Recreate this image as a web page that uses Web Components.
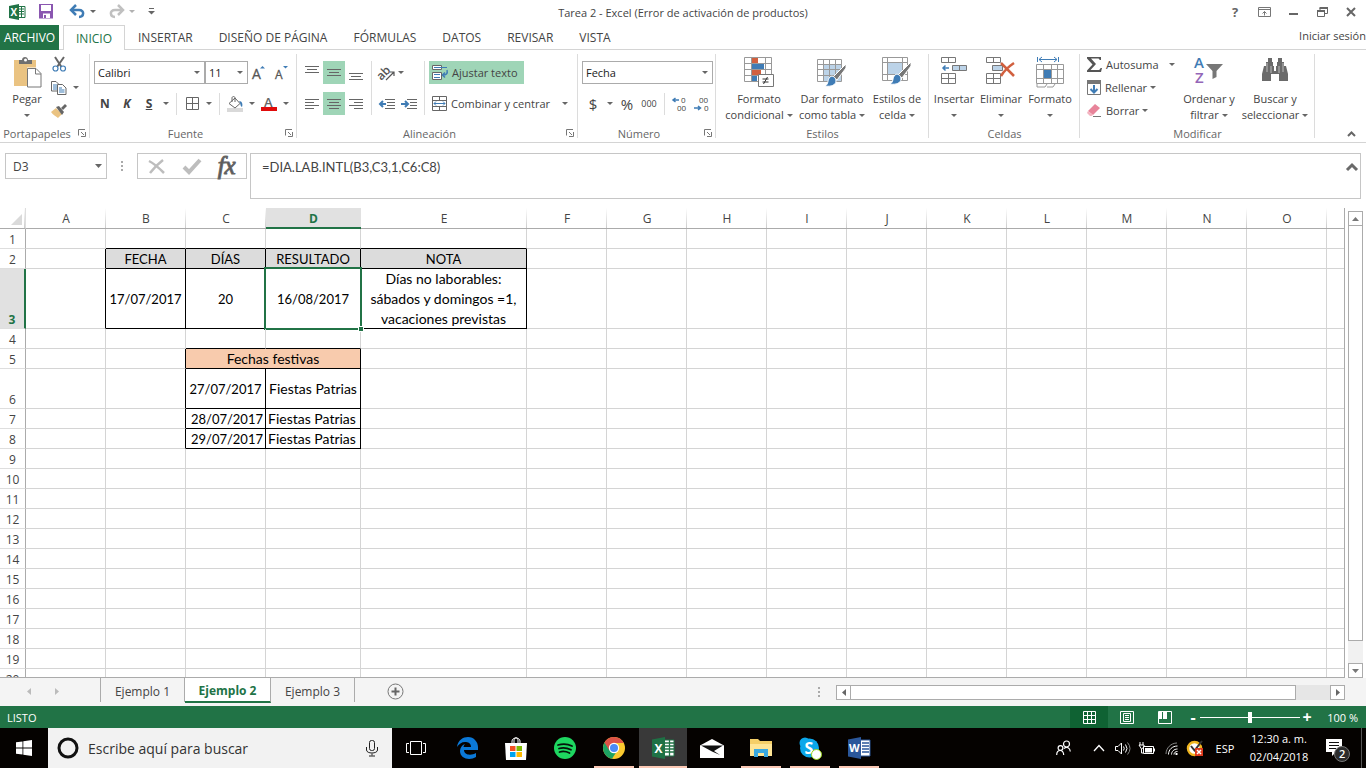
<!DOCTYPE html>
<html lang="es">
<head>
<meta charset="utf-8">
<title>Tarea 2 - Excel</title>
<style>
html,body{margin:0;height:100%}
body{font-family:"Open Sans","Noto Sans",sans-serif;font-size:11px;color:#444;background:#fff}
</style>
</head>
<body>
<excel-app></excel-app>
<script>
const RESET = `*{box-sizing:border-box}
button{font:inherit;color:inherit;background:none;border:0;padding:0;margin:0;display:flex;align-items:center;justify-content:center}
a{color:inherit;text-decoration:none}`;

function define(name, html, init) {
  customElements.define(name, class extends HTMLElement {
    constructor() { super(); this.attachShadow({ mode: 'open' }); }
    connectedCallback() {
      const t = document.createElement('template');
      t.innerHTML = `<style>${RESET}</style>` + (typeof html === 'function' ? html(this) : html);
      this.shadowRoot.replaceChildren(t.content.cloneNode(true));
      if (init) init(this.shadowRoot, this);
    }
  });
}

/* ---------- icon set: [width, height, markup] ---------- */
const lines = arr => arr.map(([y, a, b]) => `<path d="M${a} ${y}.5H${b}" stroke="#666" fill="none"/>`).join('');
const T = (x, y, s, fill, t, extra = '') => `<text x="${x}" y="${y}" font-size="${s}" fill="${fill}" font-family="Open Sans,sans-serif" ${extra}>${t}</text>`;
const ICONS = {
  caret: [6, 3, '<path d="M0 0h6L3 3z" fill="#666"/>'],
  caretBig: [7, 4, '<path d="M0 0h7L3.500 4z" fill="#666"/>'],
  launcher: [8, 8, '<path d="M.5 6.500V.5H7M3 3l3 3M7.500 3v4.500H3" stroke="#777" fill="none"/>'],
  excel: [17, 16, '<path d="M9 2.500h7v11H9" fill="#fff" stroke="#217346"/><path d="M10 5h5M10 7.500h5M10 10h5M12.500 3v10" stroke="#217346"/><path d="M0 2L10 0v16L0 14z" fill="#217346"/>' + T(1.5, 12, 10, '#fff', 'X', 'font-weight="700"')],
  save: [14, 15, '<path d="M.5.5h13v13.500H.5z" fill="#fff"/><path d="M0 0h14v14.500H0zM2 1v6h10V1zM4 9.500V14h7V9.500z" fill="#8a56b0" fill-rule="evenodd"/><path d="M5 11h2v3H5z" fill="#8a56b0"/>'],
  undo: [15, 13, '<path d="M2 5h7c6 0 5 7 0 7" stroke="#3f7cb5" stroke-width="2.500" fill="none"/><path d="M6 0L1 5l5 5" stroke="#3f7cb5" stroke-width="2.500" fill="none"/>'],
  redo: [15, 13, '<path d="M13 5H6c-6 0-5 7 0 7" stroke="#c0c0c0" stroke-width="2.500" fill="none"/><path d="M9 0l5 5-5 5" stroke="#c0c0c0" stroke-width="2.500" fill="none"/>'],
  qat: [7, 7, '<path d="M1 .5h5" stroke="#666"/><path d="M0 3h7L3.500 6.500z" fill="#666"/>'],
  help: [10, 14, T(1, 12, 13, '#666', '?', 'font-weight="700"')],
  ribbonOpts: [13, 10, '<path d="M.5.5h12v9H.5zM.5 2.500h12M6.500 8.500v-4M4.500 6.500l2-2 2 2" stroke="#777" fill="none"/>'],
  min: [9, 10, '<path d="M0 7h9" stroke="#666" stroke-width="2"/>'],
  restore: [11, 10, '<path d="M.5 4h7v5.500h-7zM3 3V1h7.500v5.500H8" stroke="#666" fill="none"/><path d="M0 4h8M2.500 1h8.500" stroke="#666" stroke-width="2"/>'],
  close: [10, 10, '<path d="M1 1l8 8M9 1L1 9" stroke="#666" stroke-width="2"/>'],
  paste: [29, 31, '<path d="M1 3h22v26H1z" fill="#eac382"/><path d="M6 7V3h3c0-4 6-4 6 0h4v4z" fill="#6f6f6f"/><circle cx="12.500" cy="3" r="1.500" fill="#fff"/><path d="M14 10.500h9.500l5 5v15H14z" fill="#fff"/><path d="M14.500 11.500h8.500l5 5v13.500H14.500z" fill="#fff" stroke="#777"/><path d="M22.500 11.500V17H28" fill="none" stroke="#777"/>'],
  cut: [15, 15, '<path d="M3 0l6.500 10M12 0L5 10" stroke="#666" stroke-width="2"/><circle cx="3.500" cy="11.500" r="2.500" fill="#fff" stroke="#3f7cb5" stroke-width="1.200"/><circle cx="11" cy="11.500" r="2.500" fill="#fff" stroke="#3f7cb5" stroke-width="1.200"/>'],
  copy: [16, 14, '<path d="M.5.5H5l2.500 2.500v7h-7z" fill="#fff" stroke="#666"/><path d="M2 4h4M2 6h4M2 8h4" stroke="#3f7cb5"/><path d="M6.500 3.500h5L15 7v6.500H6.500z" fill="#fff" stroke="#666"/><path d="M8 7h3M8 9h5.500M8 11h5.500" stroke="#3f7cb5"/>'],
  brush: [16, 14, '<path d="M0 8l5-4 6 6-4 4C5 12 2 11 0 8z" fill="#eac382"/><path d="M5 3l3-1 5 6-2 3z" fill="#666"/><path d="M10 4l4-4 2 2-4 4z" fill="#666"/>'],
  fontUp: [14, 14, T(0, 13, 14, '#555', 'A', 'stroke="#555" stroke-width=".3"') + '<path d="M8 2.500h5L10.500 0z" fill="#3f7cb5"/>'],
  fontDown: [13, 14, T(0, 13, 12, '#555', 'A', 'stroke="#555" stroke-width=".3"') + '<path d="M8 0h5l-2.500 2.500z" fill="#3f7cb5"/>'],
  border: [13, 13, '<path d="M.5.5h12v12H.5zM6.500.5v12M.5 6.500h12" stroke="#666" fill="none"/>'],
  fill: [17, 16, '<path d="M0 12h16v4H0z" fill="#d9d9d9"/><path d="M2 7.500L8 2l5 5.500L8 12z" fill="#fff" stroke="#666"/><path d="M5 6V2c0-2 3-2 3 0v4" fill="none" stroke="#666"/><path d="M12 5c3 0 4 3 3 6-2-1-1-3-3-6z" fill="#3f7cb5"/>'],
  fontColor: [16, 16, T(3, 11, 13, '#666', 'A', 'font-weight="600"') + '<path d="M0 11h16v4H0z" fill="#e00b0b"/>'],
  aTop: [14, 14, lines([[0, 0, 14], [3, 2, 12], [6, 0, 14]])],
  aMid: [14, 14, lines([[3, 0, 14], [6, 2, 12], [9, 0, 14]])],
  aBot: [14, 14, lines([[7, 0, 14], [10, 2, 12], [13, 0, 14]])],
  aLeft: [14, 10, lines([[0, 0, 14], [3, 0, 9], [6, 0, 14], [9, 0, 9]])],
  aCen: [14, 10, lines([[0, 0, 14], [3, 2, 12], [6, 0, 14], [9, 2, 12]])],
  aRight: [14, 10, lines([[0, 0, 14], [3, 5, 14], [6, 0, 14], [9, 5, 14]])],
  orient: [16, 16, T(-2, 12, 12, '#555', 'ab', 'font-weight="600" transform="rotate(-45 5 9)"') + '<path d="M7 15l7.500-7.500M11 7h4v4" stroke="#555" stroke-width="1.200" fill="none"/>'],
  outdent: [16, 10, lines([[0, 6, 16], [3, 8, 16], [6, 8, 16], [9, 6, 16]]) + '<path d="M1 5h6M4 2L1 5l3 3" stroke="#3f7cb5" stroke-width="2" fill="none"/>'],
  indent: [16, 10, lines([[0, 6, 16], [3, 9, 16], [6, 9, 16], [9, 6, 16]]) + '<path d="M0 5h6M4 2l3 3-3 3" stroke="#3f7cb5" stroke-width="2" fill="none"/>'],
  wrap: [16, 15, '<path d="M.5.5h9v4h-9zM.5 7.500h9v7h-9z" fill="#fff" stroke="#666"/><path d="M2 2.500h13M2 9.500h6M2 12.500h6" stroke="#3f7cb5"/><path d="M15 5c1 4-1 5-4 5M13 7.500L10.500 10l2.500 2.500" stroke="#3f7cb5" stroke-width="1.500" fill="none"/>'],
  merge: [15, 15, '<path d="M.5.5h14v14H.5zM.5 4.500h14M.5 10.500h14M7.500.5v4M7.500 10.500v4" stroke="#666" fill="#fff"/><path d="M2 7.500h11M4 5.500l-2 2 2 2M11 5.500l2 2-2 2" stroke="#3f7cb5" fill="none"/>'],
  decUp: [16, 16, T(9, 7, 8, '#444', '0') + T(5, 15, 8, '#444', '00') + '<path d="M1 4h6M3.500 2L1 4l2.500 2" stroke="#3f7cb5" stroke-width="1.500" fill="none"/>'],
  decDown: [16, 16, T(5, 7, 8, '#444', '00') + T(10, 15, 8, '#444', '0') + '<path d="M0 12h6M4 10l2.500 2L4 14" stroke="#3f7cb5" stroke-width="1.500" fill="none"/>'],
  condFmt: [30, 31, '<path d="M.5.5h27v24H.5z" fill="#fff"/><path d="M8 0h6v6H8zM8 12h9v6H8z" fill="#d1603f"/><path d="M8 6h12v6H8zM8 18h5v6H8z" fill="#3f7cb5"/><path d="M.5.500h27v24H.5zM.5 6.500h27M.5 12.500h27M.5 18.500h27M7.500.5v24M21.500.5v24" stroke="#999" fill="none"/><path d="M14.500 17.500h15v12h-15z" fill="#fff" stroke="#777"/><path d="M18.500 22h6M18.500 25h6M23.500 20l-4 7" stroke="#333" fill="none"/>'],
  fmtTable: [31, 30, '<path d="M.5 2.500h24v22H.5z" fill="#fff"/><path d="M6 8h18v16H6z" fill="#bcd3e8"/><path d="M.5 2.500h24v22H.5zM.5 7.500h24M.5 12.500h24M.5 18.500h24M6.500 2.500v22M12.500 2.500v22M18.500 2.500v22" stroke="#999" fill="none"/><path d="M29 7v4l-9 12-4-3z" fill="#777" stroke="#fff"/><path d="M13 20c2-2 6 0 6 4s-5 6-11 5c4-2 2-6 5-9z" fill="#3f7cb5" stroke="#fff"/>'],
  cellStyle: [31, 30, '<path d="M.5.500h25v23H.5zM.5 5.500h25M.5 17.500h25M5.500.5v23M20.500.5v23" stroke="#999" fill="#fff"/><path d="M6 6h14v11H6z" fill="#bcd3e8"/><path d="M29 5v4l-9 12-4-3z" fill="#777" stroke="#fff"/><path d="M13 18c2-2 6 0 6 4s-5 6-11 5c4-2 2-6 5-9z" fill="#3f7cb5" stroke="#fff"/>'],
  insCell: [27, 28, '<path d="M.5.5h14v5H.5zM7.500.5v5M.5 16.500h14v10H.5zM7.500 16.500v10M.5 21.500h14" stroke="#777" fill="#fff"/><path d="M11.500 8.500h14v5h-14zM18.500 8.500v5" stroke="#777" fill="#bcd3e8"/><path d="M2 11h6M4.500 8.500L2 11l2.500 2.500" stroke="#3f7cb5" stroke-width="1.500" fill="none"/>'],
  delCell: [30, 28, '<path d="M.5.5h14v5H.5zM7.500.5v5M.5 16.500h14v10H.5zM7.500 16.500v10M.5 21.500h14" stroke="#777" fill="#fff"/><path d="M6.500 8.500h10v5h-10z" stroke="#777" fill="#bcd3e8"/><path d="M15 6l13 13M28 6C22 10 18 14 15 19" stroke="#d1603f" stroke-width="2.500" fill="none"/>'],
  fmtCell: [29, 31, '<path d="M1.500 0v5M22.500 0v5M3 2.500h18M6 0L3 2.500 6 5M18 0l3 2.500L18 5" stroke="#3f7cb5" fill="none"/><path d="M.5 7.500h27v19H.5zM.5 12.500h27M.5 21.500h27M7.500 7.500v19M15.500 7.500v19M21.500 7.500v19" stroke="#999" fill="#fff"/><path d="M8 13h7v8H8z" fill="#3f7cb5"/><path d="M1 27v3h8l2-3M11 30h6l2-3" stroke="#999" fill="none"/>'],
  sigma: [15, 15, '<path d="M0 0h14v3h-1.500c0-1-.5-1.500-2-1.500H4l5 5.500-5.500 6H11c1.500 0 2-.5 2.500-2H15l-1 4H0v-1.500L5.500 7.500 0 1.500z" fill="#555"/>'],
  fillDown: [14, 15, '<path d="M.5.5h13v14H.5z" fill="#fff" stroke="#777"/><path d="M0 0h14v4H0z" fill="#777"/><path d="M7 5v7M3.500 9L7 12.500 10.500 9" stroke="#3f7cb5" stroke-width="2" fill="none"/>'],
  erase: [15, 13, '<path d="M1 7l7-7 5 4-7 7z" fill="#e8849a"/><path d="M1 7l5 4-1.500 1H3L0 9z" fill="#f3b3c0"/><path d="M6 12.500h8" stroke="#777"/>'],
  sort: [30, 29, T(0, 11, 15, '#3f7cb5', 'A', 'font-weight="600"') + T(1, 26, 15, '#9466b8', 'Z', 'font-weight="600"') + '<path d="M12 7h17l-6.500 7v6l-4 2v-8z" fill="#777"/>'],
  find: [28, 25, '<path d="M7 1h4v4H7zM17 1h4v4h-4zM5 5h7v4H5zM16 5h7v4h-7zM3 9h10v5h2V9h10l2 8v7h-9v-7h-8v7H1v-7z" fill="#6a6a6a"/><path d="M6 6v9M22 6v9M10 9v7M18 9v7" stroke="#bbb"/>'],
  up: [9, 6, '<path d="M1 5l3.500-3.500L8 5" stroke="#666" stroke-width="2" fill="none"/>'],
  upBold: [12, 8, '<path d="M1 7l5-5 5 5" stroke="#6a6a6a" stroke-width="3" fill="none"/>'],
  cancel: [18, 15, '<path d="M1 2c6 3 11 8 15 12M15 1C11 4 6 9 2 14" stroke="#bdbdbd" stroke-width="2.500" fill="none"/>'],
  accept: [19, 16, '<path d="M1 9l5 5L17 2" stroke="#bdbdbd" stroke-width="4" fill="none"/>'],
  dots: [3, 11, '<path d="M0 0h2v2H0zM0 4h2v2H0zM0 8h2v2H0z" fill="#aaa"/>'],
  triUp: [7, 4, '<path d="M0 4h7L3.500 0z" fill="#777"/>'],
  triDown: [7, 4, '<path d="M0 0h7L3.500 4z" fill="#777"/>'],
  triL: [4, 7, '<path d="M4 0v7L0 3.500z" fill="currentColor"/>'],
  triR: [4, 7, '<path d="M0 0v7l4-3.500z" fill="currentColor"/>'],
  add: [17, 17, '<circle cx="8.500" cy="8.500" r="7.500" fill="none" stroke="#777"/><path d="M4.500 8.500h8M8.500 4.500v8" stroke="#666" stroke-width="2"/>'],
  corner: [11, 11, '<path d="M11 0v11H0z" fill="#dadada"/>'],
  vNormal: [13, 13, '<path d="M.5.5h12v12H.5zM.5 4.500h12M.5 8.500h12M4.500.5v12M8.500.5v12" stroke="#fff" fill="none"/>'],
  vPage: [14, 13, '<path d="M.5.5h13v12H.5zM3.500 2.500h7v8h-7zM5 4.500h4M5 6.500h4M5 8.500h4" stroke="#fff" fill="none"/>'],
  vBreak: [14, 13, '<path d="M.5.5h13v12H.5z" stroke="#fff" fill="none"/><path d="M1 1h3v7H1zM5 1h4v7H5z" fill="#fff"/>'],
  win: [16, 16, '<path d="M0 2.300L6.500 1.400v6.200H0zM7.300 1.300L16 0v7.600H7.300zM0 8.400h6.500v6.200L0 13.700zM7.300 8.400H16V16l-8.700-1.300z" fill="#fff"/>'],
  cortana: [22, 22, '<circle cx="11" cy="11" r="9" fill="none" stroke="#111" stroke-width="3"/>'],
  mic: [12, 17, '<rect x="3.500" y=".5" width="5" height="10" rx="2" fill="none" stroke="#222"/><path d="M.5 7v3c0 4 11 4 11 0V7M6 13.500v2M3 16h6" fill="none" stroke="#222"/>'],
  taskview: [20, 14, '<path d="M4.500.5h11v13h-11zM3 2.500H.5v9H3M17 2.500h2.500v9H17" stroke="#fff" fill="none"/>'],
  edge: [21, 22, '<path d="M0 10C1 3 6 0 11 0c6 0 10 5 10 10v3H7c0 5 7 6 12 3v4c-6 4-16 2-16-6 0-3 2-6 5-7-1 1-1.500 2-1.500 3H14c0-4-3-5-6-5-3.500 0-6 2-8 5z" fill="#0b78d6"/>'],
  store: [24, 23, '<path d="M8 6V4c0-4 8-4 8 0v2M10 6V3c0-3 4-3 4 0v3" stroke="#fff" fill="none"/><path d="M1 6h22l-1 17H2z" fill="#fff"/><path d="M6 9h5.500v5H6z" fill="#f25022"/><path d="M12.500 9H18v5h-5.500z" fill="#7fba00"/><path d="M6 15h5.500v5H6z" fill="#00a4ef"/><path d="M12.500 15H18v5h-5.500z" fill="#ffb900"/>'],
  spotify: [22, 22, '<circle cx="11" cy="11" r="11" fill="#1ed760"/><path d="M4 8c5-1.500 10-1 14 1M5 11.500c4-1.200 8-.7 12 1.200M5.500 15c3.500-1 7-.5 10 1" stroke="#04140a" stroke-width="1.800" stroke-linecap="round" fill="none"/>'],
  chrome: [22, 22, '<circle cx="11" cy="11" r="11" fill="#fbc92f"/><path d="M11 11L1.500 5.500A11 11 0 0 0 9 21.800L14 14z" fill="#1da362"/><path d="M11 0A11 11 0 0 0 1.500 5.500L6 13l5-7h9.800A11 11 0 0 0 11 0z" fill="#dd5347"/><circle cx="11" cy="11" r="5.200" fill="#fff"/><circle cx="11" cy="11" r="4" fill="#4b8bf5"/>'],
  excelBig: [23, 22, '<path d="M12 3h10v16H12z" fill="#fff" stroke="#217346"/><path d="M13 6h9M13 9h9M13 12h9M13 15h9M17.500 3v16" stroke="#217346" stroke-width="1.300"/><path d="M0 2.500L13 0v22L0 19.500z" fill="#1e7145"/>' + T(2.5, 15.5, 12, '#fff', 'X', 'font-weight="700"')],
  mail: [24, 19, '<path d="M12 0l12 6.500V19H0V6.500z" fill="#fff"/><path d="M1 6.500h22L14 12l6 4-8-3.500z" fill="#111"/>'],
  folder: [22, 20, '<path d="M0 1h8l2 2h12v15H0z" fill="#f5cf68"/><path d="M0 6h22v12H0z" fill="#ffe595"/><path d="M4 11h14v8h-4v-4H8v4H4z" fill="#3ba9e0"/>'],
  skype: [23, 23, '<circle cx="10.500" cy="11" r="9.500" fill="#0ba7ea"/><circle cx="6" cy="6" r="5.500" fill="#0ba7ea"/>' + T(5.5, 17, 16, '#fff', 'S', 'font-weight="700"') + '<circle cx="17.500" cy="17.500" r="5" fill="#fff" stroke="#9bd61c"/>'],
  word: [23, 22, '<path d="M12 3h10v16H12z" fill="#fff" stroke="#2b579a"/><path d="M14 6h7M14 9h7M14 12h7M14 15h7" stroke="#2b579a" stroke-width="1.300"/><path d="M0 2.500L13 0v22L0 19.500z" fill="#2b579a"/>' + T(1, 15, 11, '#fff', 'W', 'font-weight="700"')],
  people: [15, 16, '<circle cx="10.500" cy="4" r="3" fill="none" stroke="#fff" stroke-width="1.200"/><circle cx="4.500" cy="8" r="2.400" fill="none" stroke="#fff" stroke-width="1.200"/><path d="M.7 15c0-6 7-6 7 0M8 8.500c3-2.500 6-.5 6.300 3" fill="none" stroke="#fff" stroke-width="1.200"/>'],
  chev: [12, 8, '<path d="M1 7l5-5.500L11 7" fill="none" stroke="#fff" stroke-width="1.300"/>'],
  vol: [16, 13, '<path d="M.5 4.500H3l3.500-3.500v11L3 8.500H.5z" fill="none" stroke="#fff"/><path d="M8.500 4.500q1.500 2 0 4M10.500 2.500q3 4 0 8" fill="none" stroke="#fff"/><path d="M12.500.5q5 6 0 12" fill="none" stroke="#888"/>'],
  batt: [16, 13, '<path d="M4.500 4.500h10v7h-10z" fill="none" stroke="#fff"/><path d="M6 6h7v4.500H6zM15 6.500h1v3h-1z" fill="#fff"/><path d="M1 0v3M4 0v3M0 3h5v2L2.500 7zM2.500 7v4H4" stroke="#fff" fill="none"/>'],
  wifi: [13, 13, '<path d="M1 12C1 6 6 1 12 1" stroke="#888" fill="none"/><path d="M3.500 12.500c0-5 4-8.500 9-8.500M6.500 12.500c0-3 2.500-5.500 6-5.500M9 12.500c0-2 1.500-3 3.500-3" stroke="#fff" fill="none"/><path d="M10.500 11h2v2h-2z" fill="#fff"/>'],
  norton: [17, 16, '<circle cx="7.500" cy="8.500" r="6.500" fill="#fff" stroke="#f0b51e" stroke-width="2.500"/><path d="M4 6l3.500 4.500L15 1" stroke="#333" stroke-width="2" fill="none"/><path d="M8 8h8v8H8z" fill="#dd3a1c"/><path d="M10 10l4 4M14 10l-4 4" stroke="#fff" stroke-width="1.500"/>'],
  notif: [24, 24, '<path d="M0 0h16v13h-6l-4 4v-4H0z" fill="#fff"/><path d="M3 3.500h10M3 6.500h10M3 9.500h7" stroke="#111"/><circle cx="16" cy="15" r="7.500" fill="#2c2c2c" stroke="#777"/>' + T(13, 19, 11, '#fff', '2', 'font-weight="600"')],
};
customElements.define('ui-icon', class extends HTMLElement {
  connectedCallback() {
    const [w, h, body] = ICONS[this.getAttribute('name')];
    const root = this.shadowRoot || this.attachShadow({ mode: 'open' });
    root.innerHTML = `<style>:host{display:inline-flex;flex:none;vertical-align:middle}svg{display:block;overflow:visible}</style>
      <svg width="${w}" height="${h}" viewBox="0 0 ${w} ${h}" aria-hidden="true">${body}</svg>`;
  }
});

/* ---------- title bar ---------- */
define('title-bar', `
<style>
:host{display:grid;grid-template-columns:1fr auto 1fr;align-items:center;height:25px;color:#444}
.left{display:flex;align-items:center;padding:0 0 2px 9px;gap:5px}
.left ui-icon[name=save]{margin:0 12px 0 8px}
.right{display:flex;justify-content:flex-end;padding:0 6px 2px 0}
.right button{width:29px;height:22px}
h1{font-size:11px;font-weight:400;margin:0}
</style>
<div class="left"><ui-icon name="excel"></ui-icon>
<button aria-label="Guardar"><ui-icon name="save"></ui-icon></button>
<button aria-label="Deshacer"><ui-icon name="undo"></ui-icon></button><ui-icon name="caret"></ui-icon>
<button aria-label="Rehacer" style="margin-left:8px"><ui-icon name="redo"></ui-icon></button><ui-icon name="caret" style="opacity:.5"></ui-icon>
<button aria-label="Personalizar" style="margin-left:8px"><ui-icon name="qat"></ui-icon></button></div>
<h1>Tarea 2 - Excel (Error de activación de productos)</h1>
<div class="right"><button aria-label="Ayuda"><ui-icon name="help"></ui-icon></button><button aria-label="Opciones"><ui-icon name="ribbonOpts"></ui-icon></button><button aria-label="Minimizar"><ui-icon name="min"></ui-icon></button><button aria-label="Restaurar"><ui-icon name="restore"></ui-icon></button><button aria-label="Cerrar" style="width:19px;margin-left:4px"><ui-icon name="close"></ui-icon></button></div>`);

/* ---------- ribbon tabs ---------- */
define('ribbon-tabs', `
<style>
:host{display:flex;height:25px;border-bottom:1px solid #d4d4d4;font-size:12px}
nav{display:flex;flex:1}
a{display:flex;align-items:center;justify-content:center;height:25px;padding:0 13px}
.file{background:#217346;color:#fff;padding:0;width:59px;margin-right:4px}
.on{width:62px;padding:0;border:1px solid #d4d4d4;border-bottom:0;background:#fff;color:#217346}
.user{padding:0;font-size:11px;height:20px}
</style>
<nav><a class="file" href="#">ARCHIVO</a><a class="on" href="#">INICIO</a><a href="#">INSERTAR</a><a href="#">DISEÑO DE PÁGINA</a><a href="#">FÓRMULAS</a><a href="#">DATOS</a><a href="#">REVISAR</a><a href="#">VISTA</a></nav>
<a class="user" href="#">Iniciar sesión</a>`);

/* ---------- ribbon parts ---------- */
define('ribbon-group', el => `
<style>
:host{display:flex;flex-direction:column;flex:none;position:relative}
:host::after{content:"";position:absolute;right:0;top:4px;bottom:4px;width:1px;background:#dcdcdc}
.body{display:flex;height:75px}
footer{display:flex;align-items:center;height:16px;color:#666}
footer button{width:16px;height:16px}
span{flex:1;text-align:center}
</style>
<div class="body"><slot></slot></div>
<footer><span>${el.getAttribute('label')}</span>${el.hasAttribute('launcher') ? '<button aria-label="Más opciones"><ui-icon name="launcher"></ui-icon></button>' : ''}</footer>`);

define('big-button', el => `
<style>
:host{display:block;flex:none}
button{width:100%;flex-direction:column;justify-content:flex-start;padding-top:7px;line-height:16px;white-space:nowrap}
.pic{height:34px;display:flex;align-items:flex-start}
.second{display:flex;align-items:center;gap:3px;height:16px}
</style>
<button><span class="pic"><ui-icon name="${el.getAttribute('icon')}"></ui-icon></span><span>${el.getAttribute('top')}</span><span class="second">${el.getAttribute('bottom') || ''}<ui-icon name="caret"></ui-icon></span></button>`);

define('tool-button', el => `
<style>
:host{display:block;flex:none;width:22px}
:host([text]){width:auto}
button{width:100%;height:23px;gap:4px;font-size:inherit;font-weight:inherit}
:host([text]) button{padding:0 3px;justify-content:flex-start}
:host([on]) button{background:#9fd5b7}
</style>
<button title="${el.getAttribute('tip') || ''}">${el.getAttribute('icon') ? `<ui-icon name="${el.getAttribute('icon')}"></ui-icon>` : ''}<slot></slot></button>`);

define('drop-box', el => `
<style>
:host{display:flex;align-items:center;position:relative;height:23px;border:1px solid #ababab;flex:none;color:#222}
select{appearance:none;border:0;background:none;font:inherit;color:inherit;width:100%;height:100%;padding:0 3px;margin:0;outline:0}
ui-icon{position:absolute;right:4px;pointer-events:none}
</style>
<select aria-label="${el.getAttribute('label')}"><option>${el.getAttribute('value')}</option></select><ui-icon name="${el.getAttribute('caret') || 'caret'}"></ui-icon>`);

define('excel-ribbon', `
<style>
:host{display:flex;height:93px;border-bottom:1px solid #d4d4d4;color:#444}
.rows{display:flex;flex-direction:column;padding-top:7px}
.rows>div{display:flex;align-items:center;height:31px}
.list{display:flex;flex-direction:column;padding-top:3px}
.list>div{display:flex;align-items:center;height:23px}
.c{width:12px;display:flex;justify-content:center}
.v{width:9px;height:22px;background:linear-gradient(#dcdcdc,#dcdcdc) center/1px 100% no-repeat}
.v.tall{height:54px;margin-top:11px}
.clip{width:90px}.font{width:207px}.align{width:281px}.num{width:138px}.sty{width:213px}.cells{width:151px}.edit{width:235px}
.pad{padding-left:4px}
.icons{margin-left:-6px}
tool-button.b{font-weight:700;font-size:12px}
tool-button.sym{font-size:15px}
tool-button.mil{font-size:9px}
.u{text-decoration:underline}
.end{margin-left:auto;display:flex;align-items:flex-end;padding:0 10px 5px}
</style>
<ribbon-group class="clip" label="Portapapeles" launcher>
  <big-button style="width:54px" icon="paste" top="Pegar"></big-button>
  <div class="list icons"><div><tool-button icon="cut" tip="Cortar"></tool-button></div><div><tool-button icon="copy" tip="Copiar"></tool-button><span class="c"><ui-icon name="caret"></ui-icon></span></div><div><tool-button icon="brush" tip="Copiar formato"></tool-button></div></div>
</ribbon-group>
<ribbon-group class="font" label="Fuente" launcher>
  <div class="rows pad"><div><drop-box label="Fuente" value="Calibri" style="width:111px"></drop-box><drop-box label="Tamaño" value="11" style="width:43px"></drop-box><tool-button icon="fontUp"></tool-button><tool-button icon="fontDown"></tool-button></div>
  <div><tool-button class="b">N</tool-button><tool-button class="b"><i>K</i></tool-button><tool-button class="b"><span class="u">S</span></tool-button><span class="c"><ui-icon name="caret"></ui-icon></span><span class="v"></span><tool-button icon="border"></tool-button><span class="c"><ui-icon name="caret"></ui-icon></span><span class="v"></span><tool-button icon="fill"></tool-button><span class="c"><ui-icon name="caret"></ui-icon></span><tool-button icon="fontColor"></tool-button><span class="c"><ui-icon name="caret"></ui-icon></span></div></div>
</ribbon-group>
<ribbon-group class="align" label="Alineación" launcher>
  <div class="rows pad"><div><tool-button icon="aTop"></tool-button><tool-button icon="aMid" on></tool-button><tool-button icon="aBot"></tool-button></div><div><tool-button icon="aLeft"></tool-button><tool-button icon="aCen" on></tool-button><tool-button icon="aRight"></tool-button></div></div>
  <span class="v tall"></span>
  <div class="rows"><div><tool-button icon="orient"></tool-button><ui-icon name="caret"></ui-icon></div><div><tool-button icon="outdent"></tool-button><tool-button icon="indent"></tool-button></div></div>
  <span class="v tall"></span>
  <div class="rows"><div><tool-button text on icon="wrap" style="width:95px">Ajustar texto</tool-button></div><div><tool-button text icon="merge" style="width:130px">Combinar y centrar</tool-button><span class="c"><ui-icon name="caret"></ui-icon></span></div></div>
</ribbon-group>
<ribbon-group class="num" label="Número" launcher>
  <div class="rows pad"><div><drop-box label="Formato de número" value="Fecha" style="width:131px"></drop-box></div>
  <div><tool-button class="sym">$</tool-button><span class="c"><ui-icon name="caret"></ui-icon></span><tool-button class="sym">%</tool-button><tool-button class="mil">000</tool-button><span class="v"></span><tool-button icon="decUp"></tool-button><tool-button icon="decDown"></tool-button></div></div>
</ribbon-group>
<ribbon-group class="sty" label="Estilos"><big-button class="pad" style="width:82px" icon="condFmt" top="Formato" bottom="condicional"></big-button><big-button style="width:68px" icon="fmtTable" top="Dar formato" bottom="como tabla"></big-button><big-button style="width:62px" icon="cellStyle" top="Estilos de" bottom="celda"></big-button></ribbon-group>
<ribbon-group class="cells" label="Celdas"><big-button style="width:50px" icon="insCell" top="Insertar"></big-button><big-button style="width:44px" icon="delCell" top="Eliminar"></big-button><big-button style="width:54px" icon="fmtCell" top="Formato"></big-button></ribbon-group>
<ribbon-group class="edit" label="Modificar">
  <div class="list pad" style="width:96px"><div><tool-button text icon="sigma">Autosuma</tool-button><span class="c" style="margin-left:6px"><ui-icon name="caret"></ui-icon></span></div><div><tool-button text icon="fillDown">Rellenar</tool-button><ui-icon name="caret"></ui-icon></div><div><tool-button text icon="erase">Borrar</tool-button><ui-icon name="caret"></ui-icon></div></div>
  <big-button style="width:66px" icon="sort" top="Ordenar y" bottom="filtrar"></big-button><big-button style="width:66px" icon="find" top="Buscar y" bottom="seleccionar"></big-button>
</ribbon-group>
<div class="end"><button aria-label="Contraer"><ui-icon name="up"></ui-icon></button></div>`);

/* ---------- formula bar ---------- */
define('formula-bar', `
<style>
:host{display:flex;align-items:flex-start;padding:10px 5px 0;height:65px}
drop-box{width:102px;height:26px;border-color:#c6c6c6;padding-left:4px;font-size:12px;color:#444}
.dots{width:30px;height:26px;display:flex;align-items:center;justify-content:center}
.btns{display:flex;width:110px;height:26px;border:1px solid #c6c6c6;padding:0 2px}
.btns button{flex:1}
.btns .fx{font:italic 25px/22px "Liberation Serif",serif;color:#555;-webkit-text-stroke:1px #666}
.box{flex:1;display:flex;align-items:flex-start;border:1px solid #c6c6c6;height:46px;margin-left:3px}
textarea{flex:1;border:0;outline:0;resize:none;height:42px;padding:4px 11px;font:13px/18px Lato,sans-serif;color:#444;background:none;overflow:hidden}
.box button{padding:9px 2px}
</style>
<drop-box label="Cuadro de nombres" value="D3" caret="caretBig"></drop-box>
<span class="dots"><ui-icon name="dots"></ui-icon></span>
<div class="btns"><button aria-label="Cancelar"><ui-icon name="cancel"></ui-icon></button><button aria-label="Introducir"><ui-icon name="accept"></ui-icon></button><button class="fx">fx</button></div>
<div class="box"><textarea aria-label="Fórmula" spellcheck="false">=DIA.LAB.INTL(B3,C3,1,C6:C8)</textarea><button aria-label="Contraer"><ui-icon name="upBold"></ui-icon></button></div>`);

/* ---------- sheet grid ---------- */
const COLS = 'ABCDEFGHIJKLMNO'.split('');
const WIDTHS = { D: 95, E: 166 };
const HEIGHTS = { 3: 60, 6: 40 };
// cell -> [text, classes, colspan]; r and b are black right and bottom borders, t is running text
const CELLS = {
  A2: ['', 'r'], A3: ['', 'r'], B1: ['', 'b'], C1: ['', 'b'], D1: ['', 'b'], E1: ['', 'b'],
  B2: ['FECHA', 'r b h'], C2: ['DÍAS', 'r b h'], D2: ['RESULTADO', 'r b h'], E2: ['NOTA', 'r b h'],
  B3: ['17/07/2017', 'r b'], C3: ['20', 'r b'], D3: ['16/08/2017', 'r b sel'],
  E3: ['<div class="note">Días no laborables:<br>sábados y domingos =1,<br>vacaciones previstas</div>', 'r b t'],
  C4: ['', 'b'], D4: ['', 'b'], B5: ['', 'r'], B6: ['', 'r'], B7: ['', 'r'], B8: ['', 'r'],
  C5: ['Fechas festivas', 'r b o t', 2],
  C6: ['27/07/2017', 'r b'], D6: ['Fiestas Patrias', 'r b t'],
  C7: ['28/07/2017', 'r b right'], D7: ['Fiestas Patrias', 'r b t left'],
  C8: ['29/07/2017', 'r b right'], D8: ['Fiestas Patrias', 'r b t left'],
};
define('sheet-grid', () => {
  let rows = '';
  for (let n = 1; n <= 20; n++) {
    let tds = '';
    for (let i = 0; i < COLS.length; i++) {
      const [text, cls, span] = CELLS[COLS[i] + n] || ['', ''];
      tds += `<td class="${cls}"${span ? ` colspan="${span}"` : ''}>${text}</td>`;
      if (span) i += span - 1;
    }
    rows += `<tr style="height:${HEIGHTS[n] || 20}px"><th scope="row"${n === 3 ? ' class="on"' : ''}>${n}</th>${tds}<td></td></tr>`;
  }
  return `
<style>
:host{display:block;overflow:hidden;border-right:1px solid #ababab;border-bottom:1px solid #ababab;background:#fff}
table{table-layout:fixed;width:100%;border-collapse:separate;border-spacing:0;font:13px/18px Lato,sans-serif;color:#000}
th,td{padding:0;height:20px;white-space:nowrap}
td{border-right:1px solid #d4d4d4;border-bottom:1px solid #d4d4d4;text-align:center;vertical-align:middle;position:relative}
td:last-child{border-right:0}
th{font:12px/16px "Open Sans",sans-serif;color:#444}
thead th{height:21px;padding-top:2px;border-bottom:1px solid #ababab;background:linear-gradient(#fff,#ccc) right/1px 100% no-repeat}
thead th:last-child{background:none}
thead .on{background:#e1e1e1;color:#217346;font-weight:700;border-bottom:2px solid #217346}
tbody th{border-right:1px solid #ababab;border-bottom:1px solid #dedede;vertical-align:bottom}
tbody .on{background:#e1e1e1;color:#217346;font-weight:700;border-right:2px solid #217346}
thead .corner{vertical-align:bottom;border-right:1px solid #ddd}
.corner ui-icon{margin:0 0 2px 7px}
.r{border-right-color:#000}.b{border-bottom-color:#000}
.h{background:#dcdcdc}.o{background:#f8cbad}
.t{font-size:14px}
.left{text-align:left;padding-left:2px}.right{text-align:right;padding-right:2px}
.note{line-height:20px;height:59px}
.sel::after{content:"";position:absolute;inset:-2px;border:2px solid #217346}
.sel::before{content:"";position:absolute;right:-4px;bottom:-4px;width:6px;height:6px;background:#217346;border:1px solid #fff;box-sizing:border-box;z-index:1}
</style>
<table><colgroup><col style="width:26px">${COLS.map(c => `<col style="width:${WIDTHS[c] || 80}px">`).join('')}<col></colgroup>
<thead><tr><th class="corner"><ui-icon name="corner"></ui-icon></th>${COLS.map(c => `<th scope="col"${c === 'D' ? ' class="on"' : ''}>${c}</th>`).join('')}<th></th></tr></thead>
<tbody>${rows}</tbody></table>`;
});

define('v-scroll', `
<style>
:host{display:flex;flex-direction:column;width:21px;padding:3px 3px 0;background:#fff}
button,.thumb{border:1px solid #ababab;background:#fff;width:15px}
button{height:15px;flex:none}
.track{flex:1;background:#f1f1f1;display:flex;flex-direction:column}
.thumb{flex:0 0 95%;border-top:0}
</style>
<button aria-label="Arriba"><ui-icon name="triUp"></ui-icon></button><div class="track"><div class="thumb"></div></div><button aria-label="Abajo"><ui-icon name="triDown"></ui-icon></button>`);

/* ---------- sheet tabs and horizontal scrollbar ---------- */
define('sheet-tabs', `
<style>
:host{display:flex;align-items:flex-start;height:28px;background:#f4f4f4;font-size:12px;color:#444}
.arrows{display:flex;justify-content:space-between;width:101px;height:24px;padding:3px 41px 0 27px;color:#bbb;border-right:1px solid #ababab}
nav{display:flex}
nav a{display:flex;align-items:center;justify-content:center;width:84px;height:24px;padding-top:2px;border-right:1px solid #ababab}
nav a.on{width:86px;height:25px;background:#fff;color:#217346;font-weight:700;border-bottom:2px solid #217346}
.add{margin:5px 0 0 32px}
.scroll{display:flex;align-items:center;margin:7px 21px 0 auto;height:15px;width:39%;padding-left:6px;color:#666}
.scroll button{width:15px;height:15px;background:#fff;border:1px solid #ababab;flex:none}
.track{flex:1;background:#e6e6e6;height:15px}
.thumb{width:93%;height:15px;background:#fff;border:1px solid #ababab;border-left:0}
.dots{margin-right:15px}
</style>
<div class="arrows"><button aria-label="Anterior"><ui-icon name="triL"></ui-icon></button><button aria-label="Siguiente"><ui-icon name="triR"></ui-icon></button></div>
<nav><a href="#">Ejemplo 1</a><a href="#" class="on">Ejemplo 2</a><a href="#">Ejemplo 3</a></nav>
<button class="add" aria-label="Hoja nueva"><ui-icon name="add"></ui-icon></button>
<div class="scroll"><ui-icon class="dots" name="dots"></ui-icon><button aria-label="Izquierda"><ui-icon name="triL"></ui-icon></button><div class="track"><div class="thumb"></div></div><button aria-label="Derecha"><ui-icon name="triR"></ui-icon></button></div>`);

/* ---------- status bar ---------- */
define('status-bar', `
<style>
:host{display:flex;align-items:center;height:22px;background:#217346;color:#fff;padding:0 8px 0 7px}
.views{margin-left:auto;display:flex}
.views button{width:38px;height:22px}
.views .on{background:#0f6233}
.zoom{display:flex;align-items:center;gap:2px;margin-left:4px;font-weight:700;font-size:16px}
.zoom button{width:10px;height:20px}
input{appearance:none;width:100px;height:22px;margin:0;background:linear-gradient(#fff,#fff) center/100% 1px no-repeat}
input::-webkit-slider-thumb{appearance:none;width:4px;height:11px;background:#fff}
output{width:46px;text-align:right}
</style>
<span>LISTO</span>
<div class="views"><button class="on" aria-label="Normal"><ui-icon name="vNormal"></ui-icon></button><button aria-label="Diseño"><ui-icon name="vPage"></ui-icon></button><button aria-label="Saltos"><ui-icon name="vBreak"></ui-icon></button></div>
<div class="zoom"><button>-</button><input type="range" aria-label="Zoom" value="50"><button>+</button></div><output>100 %</output>`);

/* ---------- windows taskbar ---------- */
define('task-bar', `
<style>
:host{display:flex;height:40px;background:#050200;color:#fff}
button{height:40px;width:48px;flex:none;position:relative}
.search{display:flex;align-items:center;flex:0 0 344px;background:#f2f2f2;padding:0 14px 0 9px;gap:9px}
input{flex:1;min-width:0;border:0;outline:0;background:none;font:14px "Open Sans",sans-serif;color:#333;padding:0}
input::placeholder{color:#333;opacity:1}
.apps{display:flex;gap:1px;margin-left:3px}
.run::after{content:"";position:absolute;left:4px;right:4px;bottom:0;height:2px;background:#fbc8b4}
.cur{background:#393939}.cur::after{left:0;right:0}
.tray{margin-left:auto;display:flex;align-items:center}
.tray button{width:24px}
.clock{width:72px;text-align:center;line-height:18px;font-size:11px}
.lang{width:36px;text-align:center}
.tray .note{width:46px;padding-top:6px}
.edge{width:1px;height:40px;background:#555;margin-right:4px}
</style>
<button aria-label="Inicio"><ui-icon name="win"></ui-icon></button>
<label class="search"><ui-icon name="cortana"></ui-icon><input aria-label="Buscar" placeholder="Escribe aquí para buscar"><ui-icon name="mic"></ui-icon></label>
<button aria-label="Vista de tareas"><ui-icon name="taskview"></ui-icon></button>
<div class="apps">${[['edge'], ['store'], ['spotify'], ['chrome', 'run'], ['excelBig', 'run cur'], ['mail'], ['folder', 'run'], ['skype', 'run'], ['word', 'run']].map(([i, c = '']) => `<button class="${c}" aria-label="${i}"><ui-icon name="${i}"></ui-icon></button>`).join('')}</div>
<div class="tray"><button style="margin-right:12px" aria-label="Contactos"><ui-icon name="people"></ui-icon></button><button aria-label="Iconos ocultos"><ui-icon name="chev"></ui-icon></button><button aria-label="Volumen"><ui-icon name="vol"></ui-icon></button><button aria-label="Batería"><ui-icon name="batt"></ui-icon></button><button aria-label="Red"><ui-icon name="wifi"></ui-icon></button><button aria-label="Antivirus"><ui-icon name="norton"></ui-icon></button>
<span class="lang">ESP</span><time class="clock">12:30 a. m.<br>02/04/2018</time><button class="note" aria-label="Notificaciones"><ui-icon name="notif"></ui-icon></button><span class="edge"></span></div>`);

define('excel-app', `
<style>
:host{display:flex;flex-direction:column;height:100vh;min-height:400px;overflow:hidden}
:host>*{flex:none}
.sheet{flex:1;min-height:0;display:flex}
sheet-grid{flex:1;min-width:0}
</style>
<title-bar></title-bar><ribbon-tabs></ribbon-tabs><excel-ribbon></excel-ribbon><formula-bar></formula-bar>
<div class="sheet"><sheet-grid></sheet-grid><v-scroll></v-scroll></div>
<sheet-tabs></sheet-tabs><status-bar></status-bar><task-bar></task-bar>`);
</script>
</body>
</html>
